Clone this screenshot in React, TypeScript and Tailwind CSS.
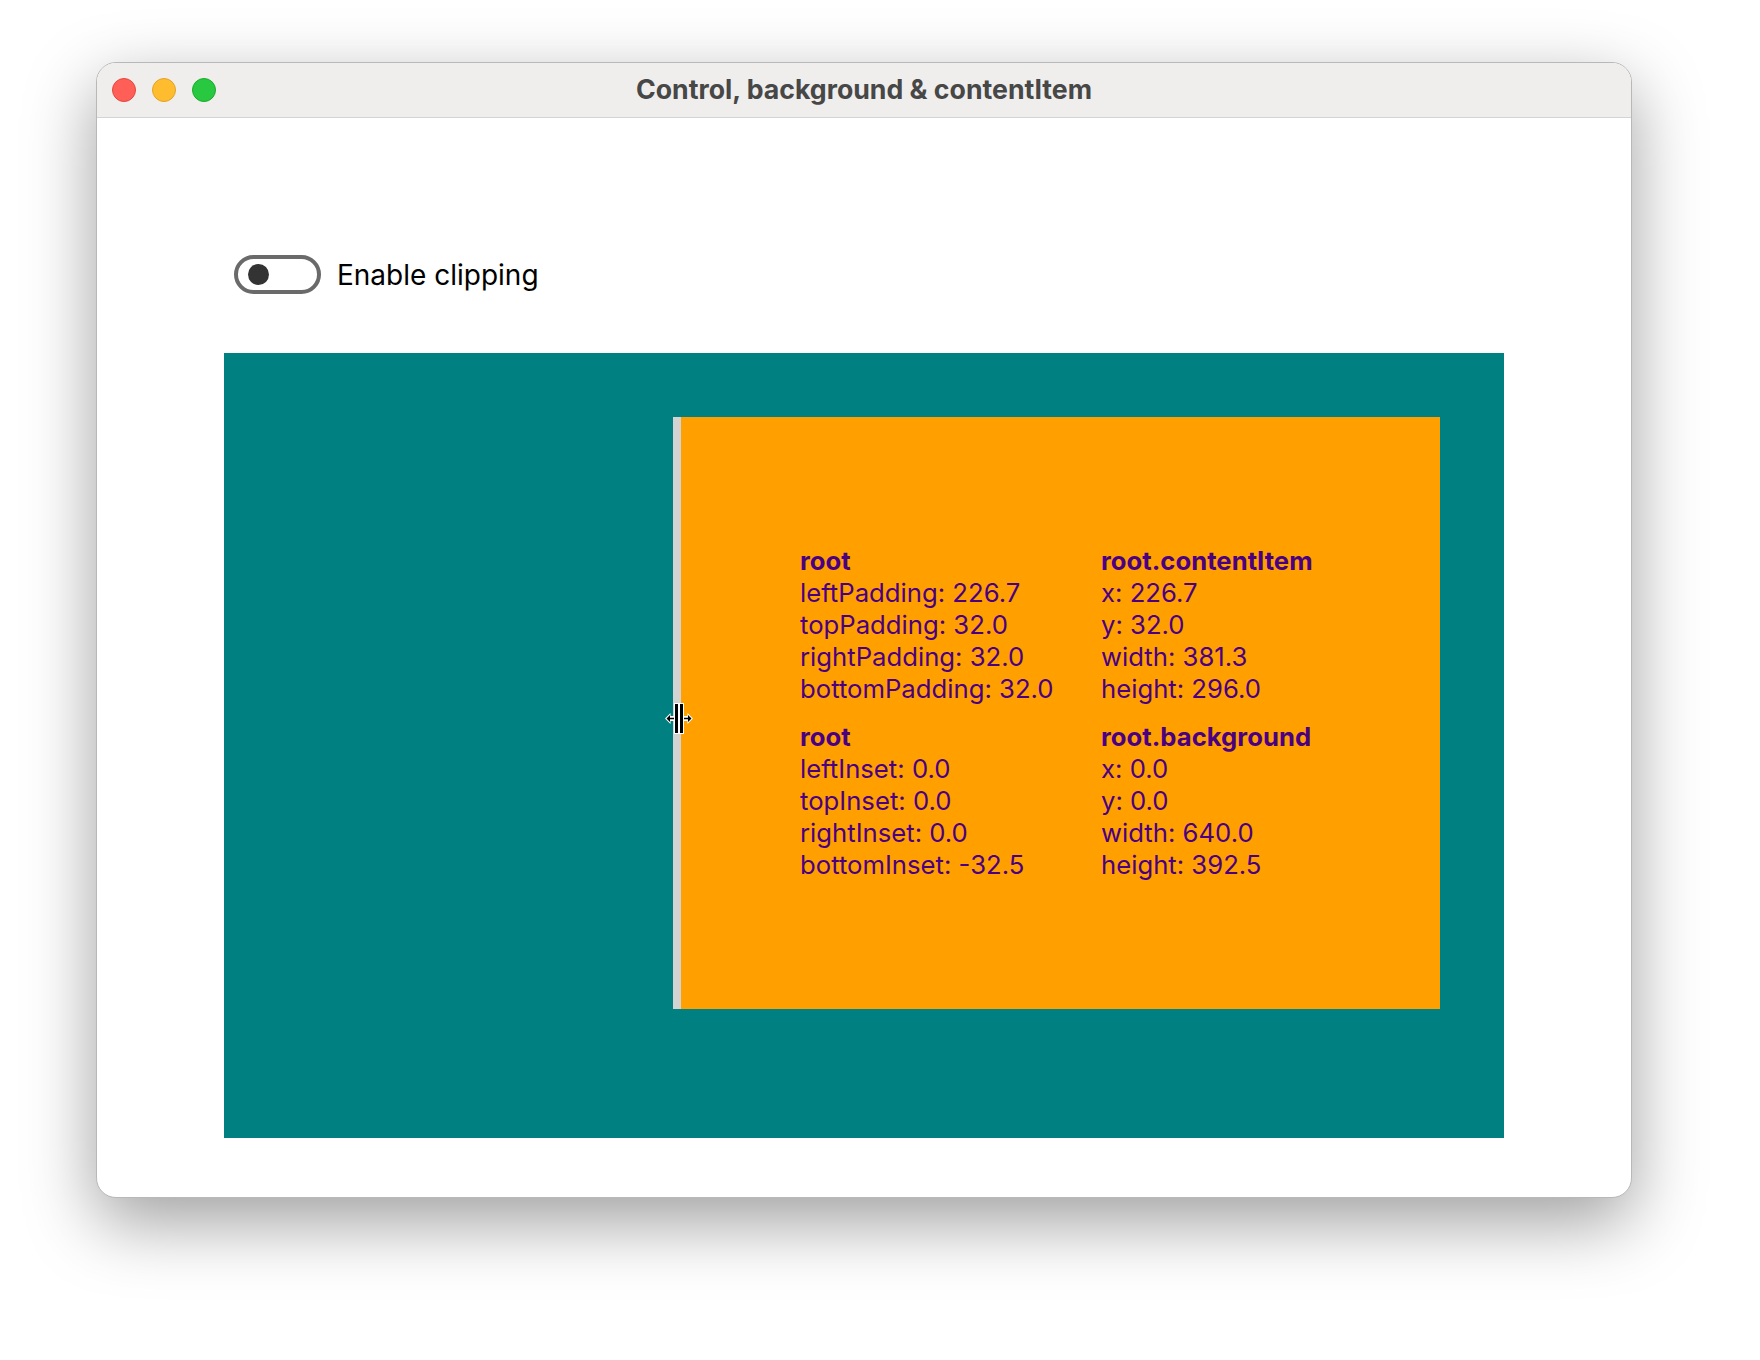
import React from 'react'

const padding = [
  ['leftPadding', '226.7'],
  ['topPadding', '32.0'],
  ['rightPadding', '32.0'],
  ['bottomPadding', '32.0'],
]

const contentItem = [
  ['x', '226.7'],
  ['y', '32.0'],
  ['width', '381.3'],
  ['height', '296.0'],
]

const insets = [
  ['leftInset', '0.0'],
  ['topInset', '0.0'],
  ['rightInset', '0.0'],
  ['bottomInset', '-32.5'],
]

const background = [
  ['x', '0.0'],
  ['y', '0.0'],
  ['width', '640.0'],
  ['height', '392.5'],
]

function Block({ title, rows }: { title: string; rows: string[][] }) {
  return (
    <div className="flex flex-col">
      <div className="font-bold">{title}</div>
      {rows.map(([k, v]) => (
        <div key={k}>
          {k}: {v}
        </div>
      ))}
    </div>
  )
}

function ResizeCursor() {
  return (
    <svg width="28" height="32" viewBox="0 0 28 32" className="absolute left-[-8px] top-[286px]">
      {/* arrows */}
      <path d="M0 15.5 L5.5 10 L5.5 13 L9 13 L9 18 L5.5 18 L5.5 21 Z" fill="white" />
      <path d="M28 15.5 L22.5 10 L22.5 13 L19 13 L19 18 L22.5 18 L22.5 21 Z" fill="white" />
      <path d="M1.5 15.5 L5 12 L5 19 Z M5 14.7 L9 14.7 L9 16.3 L5 16.3 Z" fill="black" />
      <path d="M26.5 15.5 L23 12 L23 19 Z M19 14.7 L23 14.7 L23 16.3 L19 16.3 Z" fill="black" />
      {/* bars */}
      <rect x="9" y="0" width="10" height="31" fill="white" />
      <rect x="10" y="1" width="3" height="29" fill="black" />
      <rect x="15" y="1" width="3" height="29" fill="black" />
    </svg>
  )
}

export default function App() {
  return (
    <div className="w-[1760px] h-[1360px] bg-white pl-[96px] pt-[62px] font-['Inter',sans-serif]">
      {/* Window */}
      <div className="w-[1536px] h-[1136px] rounded-[20px] overflow-hidden border border-[#b8b8b8] bg-white flex flex-col shadow-[0_24px_70px_rgba(0,0,0,0.38)]">
        {/* Title bar */}
        <div className="relative h-[55px] shrink-0 bg-[#efeeed] border-b border-[#d4d4d4] flex items-center pl-[15px]">
          <div className="flex gap-[16px]">
            <span className="w-[24px] h-[24px] rounded-full bg-[#ff5f57] border border-[#e2463f]" />
            <span className="w-[24px] h-[24px] rounded-full bg-[#febc2e] border border-[#e1a325]" />
            <span className="w-[24px] h-[24px] rounded-full bg-[#28c840] border border-[#1daa2c]" />
          </div>
          <div className="absolute inset-0 flex items-center justify-center pb-[2px] text-[26.7px] font-bold text-[#474747] pointer-events-none">
            Control, background &amp; contentItem
          </div>
        </div>

        {/* Content */}
        <div className="flex-1 flex flex-col pl-[127px] pt-[137px]">
          {/* Switch */}
          <div className="flex items-center gap-[16px] pl-[10px]">
            <div className="w-[87px] h-[39px] rounded-full border-[4px] border-[#6a6a6a] flex items-center pl-[10px]">
              <div className="w-[21px] h-[21px] rounded-full bg-[#333333]" />
            </div>
            <span className="text-[28px] text-black leading-none">Enable clipping</span>
          </div>

          {/* Control background */}
          <div className="mt-[59px] w-[1280px] h-[785px] bg-[#008080] pt-[64px] pl-[449px]">
            <div className="flex">
              <div className="relative w-[8px] h-[592px] bg-[#d3d3d3]">
                <ResizeCursor />
              </div>
              <div className="w-[759px] h-[592px] bg-[#ffa000] pl-[119px] pt-[128px] text-[#4b0082] text-[25.7px] leading-[32px]">
                <div className="grid grid-cols-[301px_auto] gap-y-[16px]">
                  <Block title="root" rows={padding} />
                  <Block title="root.contentItem" rows={contentItem} />
                  <Block title="root" rows={insets} />
                  <Block title="root.background" rows={background} />
                </div>
              </div>
            </div>
          </div>
        </div>
      </div>
    </div>
  )
}
